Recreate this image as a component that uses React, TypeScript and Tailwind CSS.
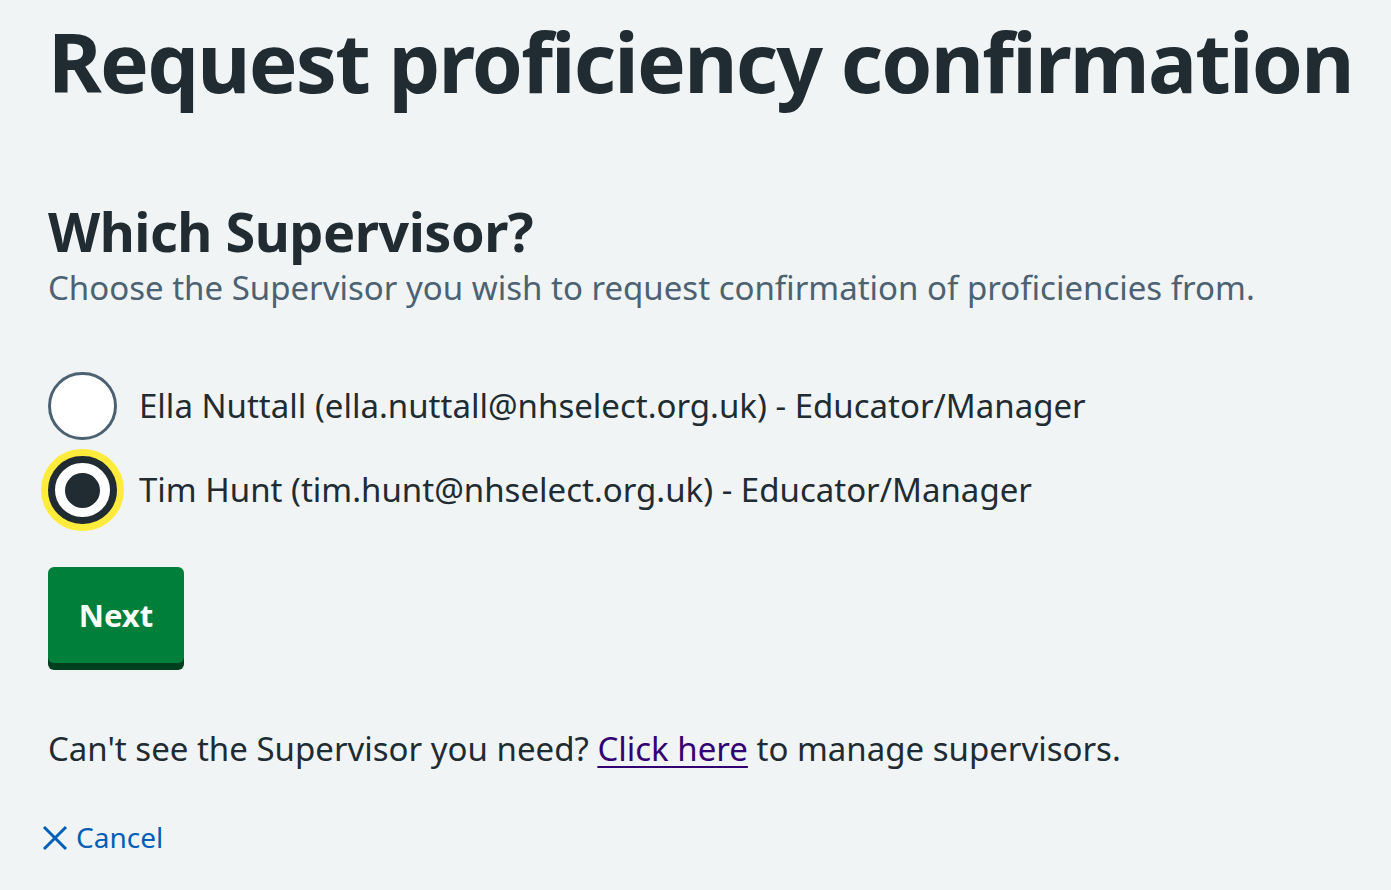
import * as React from 'react';

const supervisors = [
  { id: 'ella', label: 'Ella Nuttall (ella.nuttall@nhselect.org.uk) - Educator/Manager' },
  { id: 'tim', label: 'Tim Hunt (tim.hunt@nhselect.org.uk) - Educator/Manager' },
];

export default function App() {
  const [selected, setSelected] = React.useState('tim');

  return (
    <div
      className="min-h-[890px] bg-[#f0f4f5] text-[#212b32] px-12"
      style={{ fontFamily: '"Noto Sans", "Open Sans", Arial, sans-serif' }}
    >
      <h1 className="pt-[16px] text-[82px] font-bold leading-[90px] tracking-[-1.8px] whitespace-nowrap">
        Request proficiency confirmation
      </h1>

      <h2 className="mt-[94px] text-[54px] font-bold leading-[62px] tracking-[-0.5px]">Which Supervisor?</h2>
      <p className="mt-[3px] text-[33px] text-[#4c6272] leading-[46px]">
        Choose the Supervisor you wish to request confirmation of proficiencies from.
      </p>

      <div className="mt-[61px] flex flex-col gap-[16px]">
        {supervisors.map((s) => {
          const checked = selected === s.id;
          return (
            <label
              key={s.id}
              className="flex items-center gap-[22px] cursor-pointer"
              onClick={() => setSelected(s.id)}
            >
              {checked ? (
                <span className="w-[69px] h-[68px] rounded-full bg-white border-[7px] border-[#212b32] flex items-center justify-center shadow-[0_0_0_7px_#ffeb3b] shrink-0">
                  <span className="w-[35px] h-[35px] rounded-full bg-[#212b32]" />
                </span>
              ) : (
                <span className="w-[69px] h-[68px] rounded-full bg-white border-[3px] border-[#4c6272] shrink-0" />
              )}
              <span className="text-[33px] leading-[46px]">{s.label}</span>
            </label>
          );
        })}
      </div>

      <button className="mt-[43px] block w-[136px] h-[96px] rounded-[6px] bg-[#007f3b] text-white text-[31px] font-bold shadow-[0_7px_0_#00401e]">
        Next
      </button>

      <p className="mt-[63px] text-[33px] leading-[46px]">
        Can't see the Supervisor you need?{' '}
        <a href="#" className="text-[#330072] underline underline-offset-[5px] decoration-[2px]">
          Click here
        </a>{' '}
        to manage supervisors.
      </p>

      <a
        href="#"
        className="mt-[46px] -ml-[6px] flex w-fit items-center gap-[8px] text-[#005eb8] text-[28px] leading-[39px]"
      >
        <svg width="26" height="26" viewBox="0 0 26 26" fill="none" stroke="#005eb8" strokeWidth="3">
          <path d="M2 2L24 24M24 2L2 24" />
        </svg>
        <span>Cancel</span>
      </a>
    </div>
  );
}
